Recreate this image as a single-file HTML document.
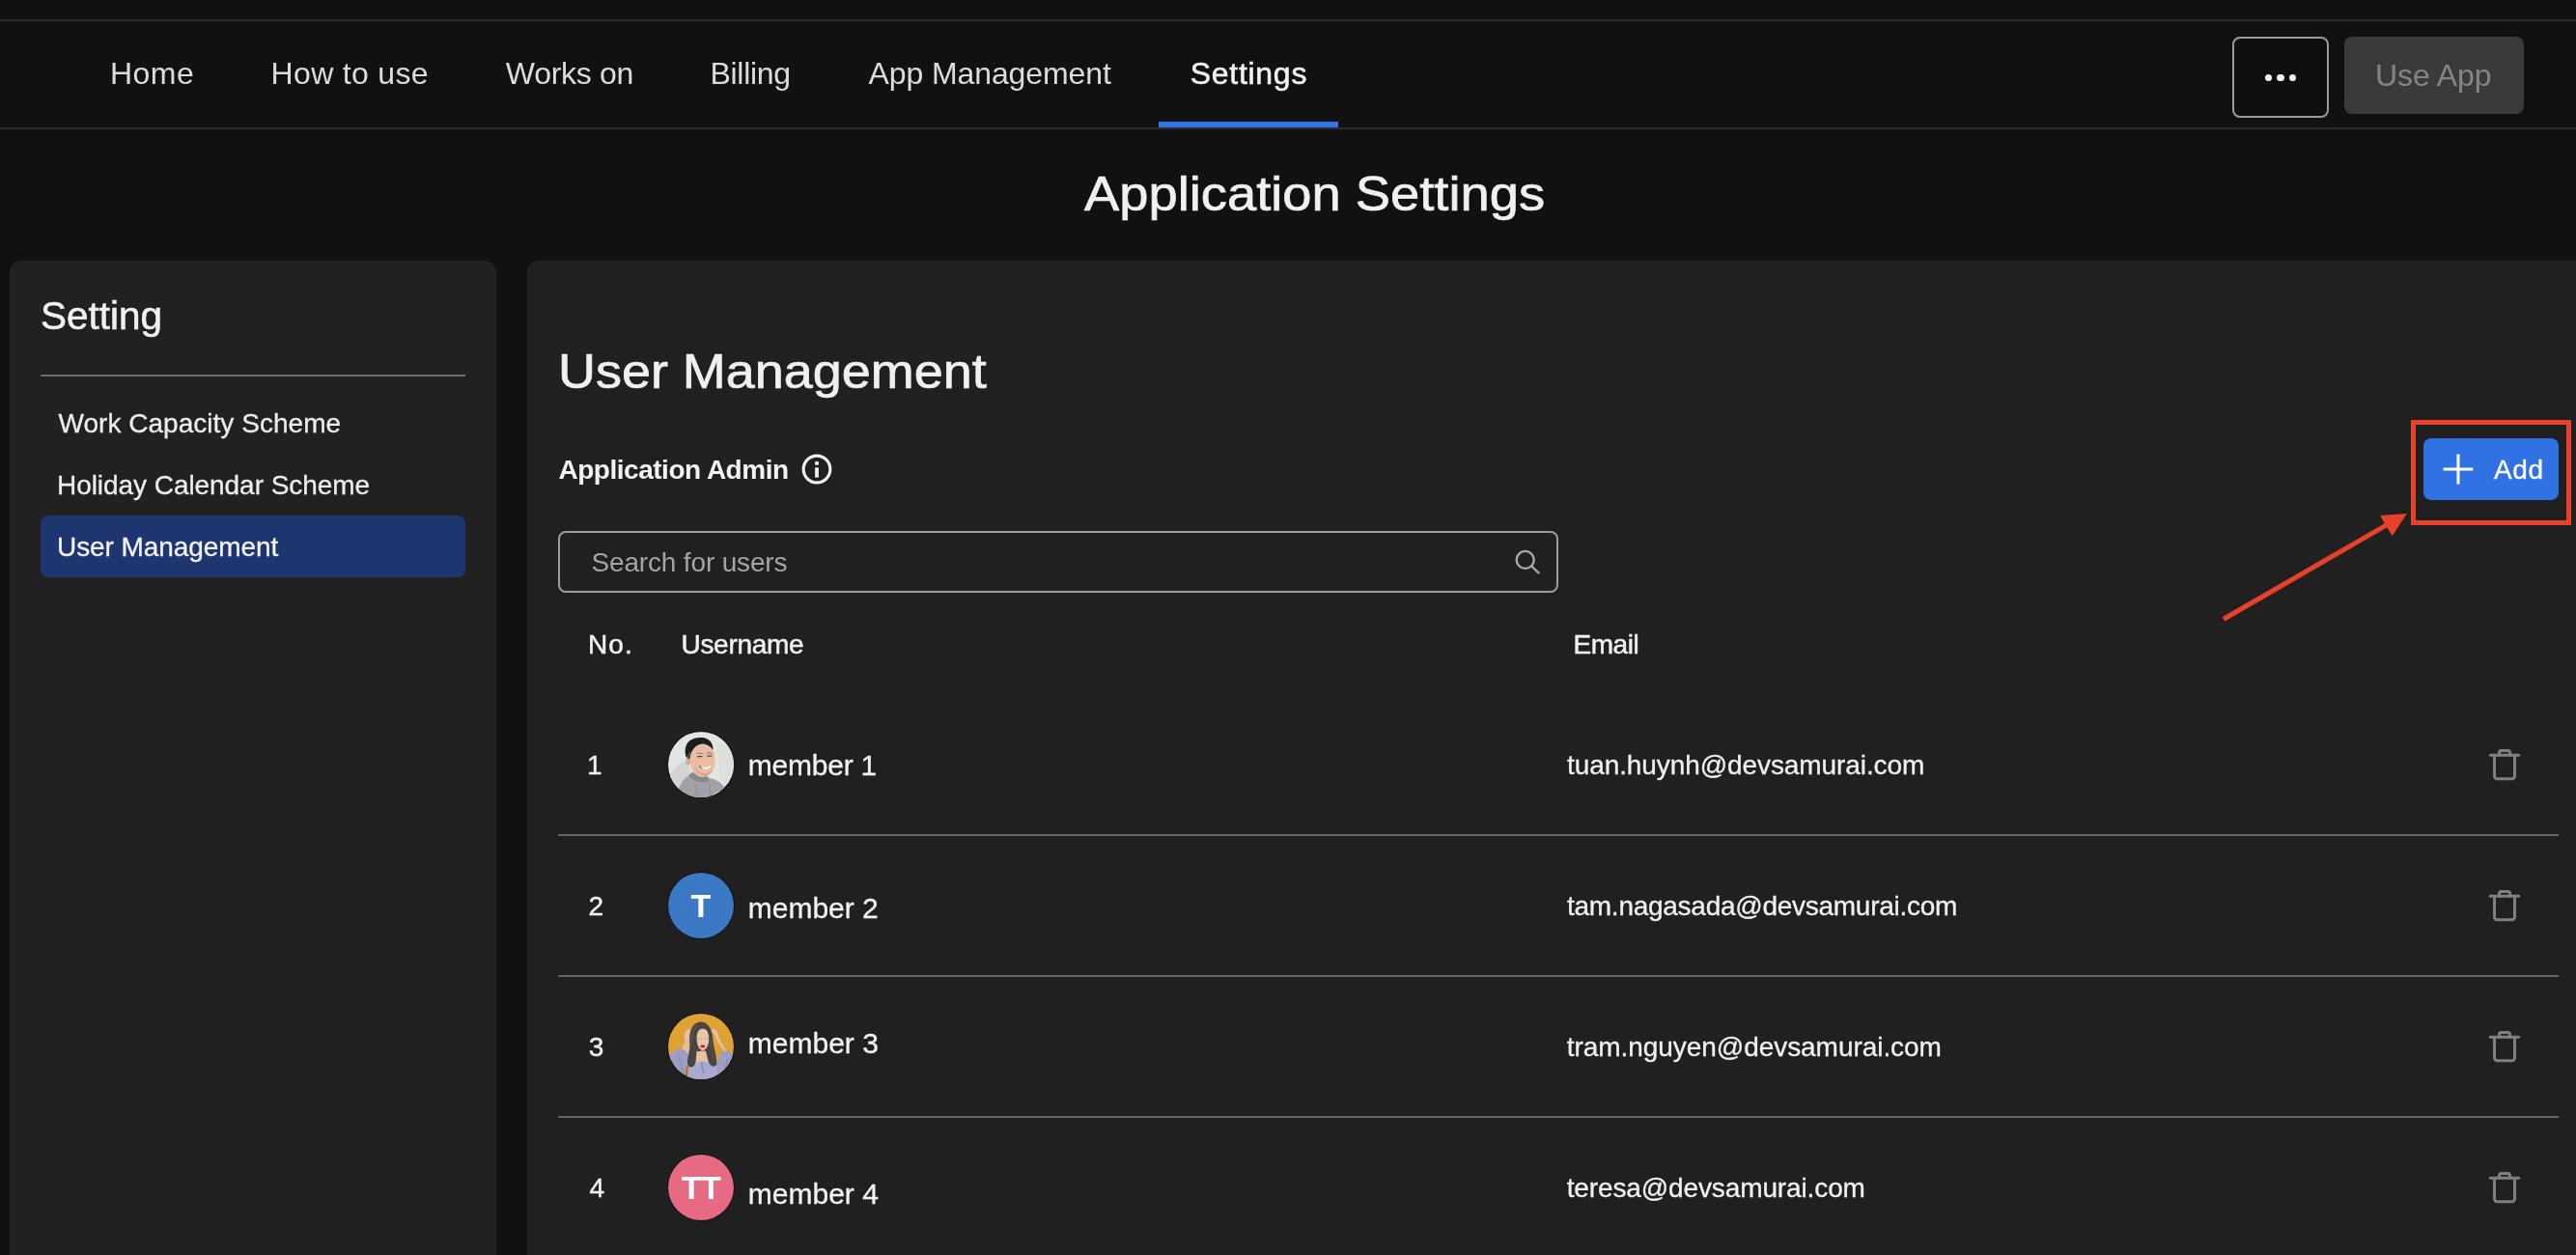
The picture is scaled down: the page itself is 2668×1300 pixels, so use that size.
<!DOCTYPE html>
<html lang="en"><head><meta charset="utf-8"><title>Application Settings</title>
<style>
*{box-sizing:border-box;margin:0;padding:0}
html,body{width:2668px;height:1300px;overflow:hidden;background:#111111}
body{font-family:"Liberation Sans",sans-serif;position:relative;-webkit-font-smoothing:antialiased}
.abs,.t{position:absolute}
.t{white-space:nowrap}
.txt{left:0;top:0;width:2668px;height:1300px;will-change:transform}
.topline{left:0;top:20px;width:2668px;height:2px;background:#2b2b31}
.navline{left:0;top:132px;width:2668px;height:2px;background:#2b2b31}
.tabline{left:1200px;top:126px;width:186px;height:6px;background:#3274e6}
.morebtn{left:2312px;top:38px;width:100px;height:84px;border:2px solid #9b9b9b;border-radius:8px;background:#0f0f0f}
.dot{width:7.6px;height:7.6px;border-radius:50%;background:#f2f2f2;top:76.9px}
.usebtn{left:2428px;top:38px;width:186px;height:80px;border-radius:8px;background:#3a3a3a}
.side{left:10px;top:270px;width:504px;height:1060px;border-radius:12px;background:#212121}
.main{left:546px;top:270px;width:2140px;height:1060px;border-radius:12px;background:#202020}
.sidehr{left:42px;top:388px;width:440px;height:2px;background:#6e6e6e}
.sel{left:42px;top:534px;width:440px;height:64px;border-radius:8px;background:#1e3570}
.search{left:578px;top:550px;width:1036px;height:64px;border:2px solid #9c9c9c;border-radius:8px}
.addbtn{left:2510px;top:454px;width:140px;height:64px;border-radius:8px;background:#3071e3}
.redbox{left:2497px;top:435px;width:166px;height:109px;border:5px solid #e8412a}
.hr{left:578px;width:2072px;height:2px;background:#666666}
.av{width:70px;height:70px;border-radius:50%;left:691px;background:#131313}
.av i{position:absolute;left:1px;top:1px;width:68px;height:68px;border-radius:50%;display:block}
svg{position:absolute;overflow:visible}
</style></head>
<body>
<div class="abs topline"></div>
<nav>
<div class="abs navline"></div>
<div class="abs tabline"></div>
<div class="abs morebtn"></div>
<div class="abs dot" style="left:2345.8px"></div><div class="abs dot" style="left:2358.3px"></div><div class="abs dot" style="left:2370.6px"></div>
<div class="abs usebtn"></div>
</nav>
<aside class="abs side"></aside>
<div class="abs sidehr"></div>
<div class="abs sel"></div>
<main class="abs main"></main>

<!-- info icon -->
<svg class="abs" style="left:829px;top:469px" width="34" height="34" viewBox="-17 -17 34 34" fill="none" stroke="#f0f0f0" stroke-width="3.1">
<circle cx="0" cy="0" r="13.85"/><path d="M0 -1.7V8.6" stroke-width="3.8"/><circle cx="0" cy="-6.1" r="2.15" fill="#f0f0f0" stroke="none"/></svg>

<div class="abs search"></div>
<!-- search icon -->
<svg class="abs" style="left:1564px;top:564px" width="34" height="34" viewBox="1564 564 34 34" fill="none" stroke="#a8a8a8" stroke-width="2.4" stroke-linecap="round">
<circle cx="1579.7" cy="579.9" r="9"/><path d="M1586.4 586.7L1593.6 593.5"/></svg>

<div class="abs addbtn"></div>
<svg class="abs" style="left:2528px;top:468px" width="36" height="36" viewBox="-18 -18 36 36" stroke="#ffffff" stroke-width="3"><path d="M-15.4 0H15.4M0 -15.4V15.4"/></svg>

<!-- annotation -->
<div class="abs redbox"></div>
<svg class="abs" style="left:0;top:0" width="2668" height="1300" viewBox="0 0 2668 1300">
<path d="M2303.1 641.3L2473 543.1" stroke="#e8412a" stroke-width="5.1" fill="none"/>
<path d="M2492.8 532L2465 534L2477.7 555.2Z" fill="#e8412a"/>
</svg>

<div class="abs hr" style="top:864px"></div>
<div class="abs hr" style="top:1010px"></div>
<div class="abs hr" style="top:1156px"></div>

<div class="abs av" style="top:757px"></div>
<svg class="abs" style="left:692px;top:758px" width="68" height="68" viewBox="12 12 68 68">
<defs><clipPath id="c1"><circle cx="46" cy="46" r="34"/></clipPath><filter id="b1" x="-20%" y="-20%" width="140%" height="140%"><feGaussianBlur stdDeviation="0.75"/></filter></defs>
<g clip-path="url(#c1)">
<rect x="10" y="10" width="72" height="84" fill="#e4e4e4"/>
<g filter="url(#b1)">
<path d="M10 66 C16 50 24 43 32 42 L36 58 L24 92 L10 92Z" fill="#d3d3d3"/>
<path d="M62 24 L82 20 L82 70 L66 62Z" fill="#dededd"/>
<path d="M20 92 C21 70 26 61 34 57.5 L44 60 L54 60 C62 61 69 65 73 74 L74 92Z" fill="#a0a2a7"/>
<path d="M33 57.5 C38 63 46 66 53 63.5 L54 60 L50 56 L37 54Z" fill="#86888c"/>
<path d="M54 62 L58 92M40 66 L45 92" stroke="#8d8f94" stroke-width="1.2" fill="none"/>
<path d="M60 76 l5 -2.4 l1 2 l-5 2.4z" fill="#f4f4f4"/>
<path d="M34 40 C33 30 38 24.5 47 24.5 C55 24.5 60 29 60.5 38 C61.5 47 59 54 53 57.5 C49 60 43 59 39.5 55.5 C35.5 51.5 34.5 46 34 40Z" fill="#e8bda4"/>
<path d="M39 47 C40 53 45 58 51 58 C55 57 58 53 59.5 48 C57 53 52 55.5 48 55 C44 54.5 41 51 39 47Z" fill="#dca88c"/>
<ellipse cx="32.6" cy="42.6" rx="2.5" ry="4.2" fill="#dba98f"/>
<path d="M30.6 38 C28.5 31 30 25 34 21.5 C38 18.5 43 17.6 47.5 18 C53 18.5 57 22 58.2 27 C58.6 28.6 58.6 30 58.2 30.6 C56 27.2 52.5 25 48.5 24.6 C44 24.4 40.5 26.6 38 30 C36 33 35 36 34.4 39.6 L33.6 40.4 C32.6 39 31.4 38.4 30.6 38Z" fill="#1b1b1d"/>
<path d="M31.4 38.2 C32.4 36 33.6 33 35.6 31 C35 34 34.6 37 34.2 39.8Z" fill="#5d4d46"/>
<path d="M45.2 47.6 C48.5 49.4 53 49.2 56.4 46.4 C55.6 51.4 48.4 52.6 45.2 47.6Z" fill="#fdf6f2"/>
<path d="M44.6 47.2 C45.4 48.6 46 49.4 46.8 50" stroke="#4a3028" stroke-width="1" fill="none"/>
<path d="M42 37.6h5.4M52.4 37.2h5" stroke="#5b4238" stroke-width="1.25" fill="none"/>
<path d="M41.4 35 C43 34 45.6 34 47.6 34.8M52 34.4 C54 33.6 56.4 33.8 57.8 34.6" stroke="#8a6a5c" stroke-width="0.9" fill="none"/>
</g></g></svg>
<div class="abs av" style="top:903px"><i style="background:#3b79c4"></i></div>
<div class="abs av" style="top:1049px"></div>
<svg class="abs" style="left:692px;top:1050px" width="68" height="68" viewBox="12 12 68 68">
<defs><clipPath id="c3"><circle cx="46" cy="46" r="34"/></clipPath><filter id="b3" x="-20%" y="-20%" width="140%" height="140%"><feGaussianBlur stdDeviation="0.7"/></filter></defs>
<g clip-path="url(#c3)">
<rect x="10" y="10" width="72" height="84" fill="#dfa234"/>
<g filter="url(#b3)">
<path d="M10 57 C16 52 21 48.5 25.5 48 C29 48.5 31 50.5 32.5 54 L35 62 L34 92 L10 92Z" fill="#9c9ec4"/>
<path d="M82 57 C78 52.5 74 50 70.5 50 C67.5 50.5 66 53 64.5 57 L61 66 L60 92 L82 92Z" fill="#9c9ec4"/>
<path d="M31 92 L33 62 C38 59 43 59 47 62 C51 59 57 59 62 62 L64 92Z" fill="#a8aad0"/>
<path d="M16 60 L24 80M74 58 L68 78M22 54 L28 74" stroke="#8c8eb6" stroke-width="1.2" fill="none"/>
<path d="M26 49 L29.5 40 C28 36 28.4 31.5 30.5 29 C32 27.6 34.6 28 35.6 30 L36 36 L35 46 L33 54 C31 51 29 49.6 26 49Z" fill="#e6bda2"/>
<path d="M69.6 50.4 L63 41 C61.6 37 60.6 34 58 32 C56 30 56.6 28 59 28 C61.6 28 63.4 30.4 63.8 34 L66 40 L73 51Z" fill="#e6bda2"/>
<path d="M40 49 H53 V64 H40Z" fill="#e6bfa6"/>
<path d="M39 64 L47.6 61 L56 64 L56 70 L39 70Z" fill="#a8aad0"/>
<path d="M34.4 44 C33 32 36.6 22 44.4 20.6 C52 20 57.2 26 58.2 37 C59 47 62.4 56 62.4 64 C60 68.6 55.6 67 53.6 61 L51 51 L41.6 51 L40.6 62 C39.6 67.6 35 69 32.4 65.6 C31 58 34.8 52 34.4 44Z" fill="#4b453f"/>
<path d="M36 44 C36 36 38 28 43 24M56 40 C57 48 59 54 59.6 62" stroke="#5c554c" stroke-width="1.1" fill="none"/>
<path d="M41.6 38 C41.4 31 44 27.4 47.6 27.4 C51.6 27.4 54.2 31.4 54.2 38 C54.2 45 51.4 50 47.8 50 C44.4 50 41.8 45 41.6 38Z" fill="#eac6ad"/>
<path d="M44.4 59.6 L45.4 50.4 L50.6 50.4 L51.4 58 L47.6 62.4Z" fill="#e8c0a6"/>
<ellipse cx="47.8" cy="45.8" rx="2.7" ry="1.6" fill="#c92d2b"/>
<path d="M42.4 37.8h4.6M49.6 37.8h4.4" stroke="#b99c8a" stroke-width="0.9" fill="none"/>
<path d="M46.6 62 L48.6 74" stroke="#8688b2" stroke-width="1.4" fill="none"/>
<path d="M30.4 80 L32 66" stroke="#b4701f" stroke-width="2.2" fill="none"/>
</g></g></svg>
<div class="abs av" style="top:1195px"><i style="background:#e66a82"></i></div>

<svg class="abs" style="left:2574px;top:772px" width="40" height="40" viewBox="-20 -20 40 40" fill="none" stroke="#808080" stroke-width="3" stroke-linecap="round" stroke-linejoin="round">
<path d="M-14.7 -9.7H14.7"/>
<path d="M-5.5 -9.7V-12.6a2 2 0 0 1 2 -2H3.5a2 2 0 0 1 2 2V-9.7"/>
<path d="M-10.5 -9.7V11.7a3 3 0 0 0 3 3H7.5a3 3 0 0 0 3 -3V-9.7"/>
</svg>
<svg class="abs" style="left:2574px;top:918px" width="40" height="40" viewBox="-20 -20 40 40" fill="none" stroke="#808080" stroke-width="3" stroke-linecap="round" stroke-linejoin="round">
<path d="M-14.7 -9.7H14.7"/>
<path d="M-5.5 -9.7V-12.6a2 2 0 0 1 2 -2H3.5a2 2 0 0 1 2 2V-9.7"/>
<path d="M-10.5 -9.7V11.7a3 3 0 0 0 3 3H7.5a3 3 0 0 0 3 -3V-9.7"/>
</svg>
<svg class="abs" style="left:2574px;top:1064px" width="40" height="40" viewBox="-20 -20 40 40" fill="none" stroke="#808080" stroke-width="3" stroke-linecap="round" stroke-linejoin="round">
<path d="M-14.7 -9.7H14.7"/>
<path d="M-5.5 -9.7V-12.6a2 2 0 0 1 2 -2H3.5a2 2 0 0 1 2 2V-9.7"/>
<path d="M-10.5 -9.7V11.7a3 3 0 0 0 3 3H7.5a3 3 0 0 0 3 -3V-9.7"/>
</svg>
<svg class="abs" style="left:2574px;top:1210px" width="40" height="40" viewBox="-20 -20 40 40" fill="none" stroke="#808080" stroke-width="3" stroke-linecap="round" stroke-linejoin="round">
<path d="M-14.7 -9.7H14.7"/>
<path d="M-5.5 -9.7V-12.6a2 2 0 0 1 2 -2H3.5a2 2 0 0 1 2 2V-9.7"/>
<path d="M-10.5 -9.7V11.7a3 3 0 0 0 3 3H7.5a3 3 0 0 0 3 -3V-9.7"/>
</svg>

<div class="abs txt">
<div class="t" style="left:114.00px;top:60.00px;font-size:32px;line-height:32px;color:#dcdcdc;letter-spacing:0.479px;">Home</div>
<div class="t" style="left:280.60px;top:60.00px;font-size:32px;line-height:32px;color:#dcdcdc;letter-spacing:0.313px;">How to use</div>
<div class="t" style="left:523.80px;top:60.00px;font-size:32px;line-height:32px;color:#dcdcdc;letter-spacing:-0.295px;">Works on</div>
<div class="t" style="left:735.50px;top:60.00px;font-size:32px;line-height:32px;color:#dcdcdc;letter-spacing:-0.296px;">Billing</div>
<div class="t" style="left:899.60px;top:60.00px;font-size:32px;line-height:32px;color:#dcdcdc;letter-spacing:-0.109px;">App Management</div>
<div class="t" style="left:1232.70px;top:60.00px;font-size:32px;line-height:32px;color:#f2f2f2;letter-spacing:0.725px;-webkit-text-stroke:0.55px #f2f2f2;">Settings</div>
<div class="t" style="left:2460.00px;top:62.00px;font-size:32px;line-height:32px;color:#858585;letter-spacing:-0.073px;">Use App</div>
<div class="t" style="left:1123.00px;top:176.00px;font-size:50px;line-height:50px;color:#f0f0f0;transform:scaleX(1.0864);transform-origin:0 0;-webkit-text-stroke:0.7px #f0f0f0;">Application Settings</div>
<div class="t" style="left:42.39px;top:307.00px;font-size:40px;line-height:40px;color:#f0f0f0;transform:scaleX(1.0108);transform-origin:0 0;-webkit-text-stroke:0.55px #f0f0f0;">Setting</div>
<div class="t" style="left:60.50px;top:425.00px;font-size:28px;line-height:28px;color:#ececec;letter-spacing:0.028px;-webkit-text-stroke:0.3px #ececec;">Work Capacity Scheme</div>
<div class="t" style="left:59.00px;top:489.00px;font-size:28px;line-height:28px;color:#ececec;letter-spacing:-0.055px;-webkit-text-stroke:0.3px #ececec;">Holiday Calendar Scheme</div>
<div class="t" style="left:59.00px;top:553.00px;font-size:28px;line-height:28px;color:#f2f2f2;letter-spacing:-0.075px;-webkit-text-stroke:0.3px #f2f2f2;">User Management</div>
<div class="t" style="left:577.66px;top:360.00px;font-size:50px;line-height:50px;color:#f0f0f0;transform:scaleX(1.0788);transform-origin:0 0;-webkit-text-stroke:0.7px #f0f0f0;">User Management</div>
<div class="t" style="left:578.50px;top:473.00px;font-size:28px;line-height:28px;color:#f2f2f2;font-weight:700;letter-spacing:-0.483px;">Application Admin</div>
<div class="t" style="left:612.50px;top:569.00px;font-size:28px;line-height:28px;color:#a4a4a4;letter-spacing:-0.161px;">Search for users</div>
<div class="t" style="left:2583.00px;top:473.00px;font-size:28px;line-height:28px;color:#ffffff;letter-spacing:0.626px;-webkit-text-stroke:0.3px #ffffff;">Add</div>
<div class="t" style="left:609.00px;top:654.00px;font-size:28px;line-height:28px;color:#f0f0f0;letter-spacing:1.104px;-webkit-text-stroke:0.5px #f0f0f0;">No.</div>
<div class="t" style="left:705.50px;top:654.00px;font-size:28px;line-height:28px;color:#f0f0f0;letter-spacing:-0.298px;-webkit-text-stroke:0.5px #f0f0f0;">Username</div>
<div class="t" style="left:1629.50px;top:654.00px;font-size:28px;line-height:28px;color:#f0f0f0;letter-spacing:-0.448px;-webkit-text-stroke:0.5px #f0f0f0;">Email</div>
<div class="t" style="left:607.95px;top:779.00px;font-size:28px;line-height:28px;color:#f0f0f0;-webkit-text-stroke:0.4px #f0f0f0;">1</div>
<div class="t" style="left:774.80px;top:778.00px;font-size:30px;line-height:30px;color:#f2f2f2;letter-spacing:-0.223px;-webkit-text-stroke:0.3px #f2f2f2;">member 1</div>
<div class="t" style="left:1623.00px;top:779.00px;font-size:28px;line-height:28px;color:#f0f0f0;letter-spacing:-0.086px;-webkit-text-stroke:0.3px #f0f0f0;">tuan.huynh@devsamurai.com</div>
<div class="t" style="left:609.40px;top:925.00px;font-size:28px;line-height:28px;color:#f0f0f0;-webkit-text-stroke:0.4px #f0f0f0;">2</div>
<div class="t" style="left:774.80px;top:926.00px;font-size:30px;line-height:30px;color:#f2f2f2;letter-spacing:-0.023px;-webkit-text-stroke:0.3px #f2f2f2;">member 2</div>
<div class="t" style="left:1623.00px;top:925.00px;font-size:28px;line-height:28px;color:#f0f0f0;letter-spacing:-0.268px;-webkit-text-stroke:0.3px #f0f0f0;">tam.nagasada@devsamurai.com</div>
<div class="t" style="left:609.85px;top:1071.00px;font-size:28px;line-height:28px;color:#f0f0f0;-webkit-text-stroke:0.4px #f0f0f0;">3</div>
<div class="t" style="left:774.80px;top:1066.00px;font-size:30px;line-height:30px;color:#f2f2f2;-webkit-text-stroke:0.3px #f2f2f2;">member 3</div>
<div class="t" style="left:1622.70px;top:1071.00px;font-size:28px;line-height:28px;color:#f0f0f0;letter-spacing:-0.050px;-webkit-text-stroke:0.3px #f0f0f0;">tram.nguyen@devsamurai.com</div>
<div class="t" style="left:610.50px;top:1217.00px;font-size:28px;line-height:28px;color:#f0f0f0;-webkit-text-stroke:0.4px #f0f0f0;">4</div>
<div class="t" style="left:774.80px;top:1222.00px;font-size:30px;line-height:30px;color:#f2f2f2;-webkit-text-stroke:0.3px #f2f2f2;">member 4</div>
<div class="t" style="left:1622.70px;top:1217.00px;font-size:28px;line-height:28px;color:#f0f0f0;letter-spacing:-0.121px;-webkit-text-stroke:0.3px #f0f0f0;">teresa@devsamurai.com</div>
<div class="t" style="left:715.60px;top:921.00px;font-size:34px;line-height:34px;color:#ffffff;font-weight:700;">T</div>
<div class="t" style="left:705.70px;top:1213.00px;font-size:34px;line-height:34px;color:#ffffff;font-weight:700;letter-spacing:-0.369px;">TT</div>
</div>
</body></html>
